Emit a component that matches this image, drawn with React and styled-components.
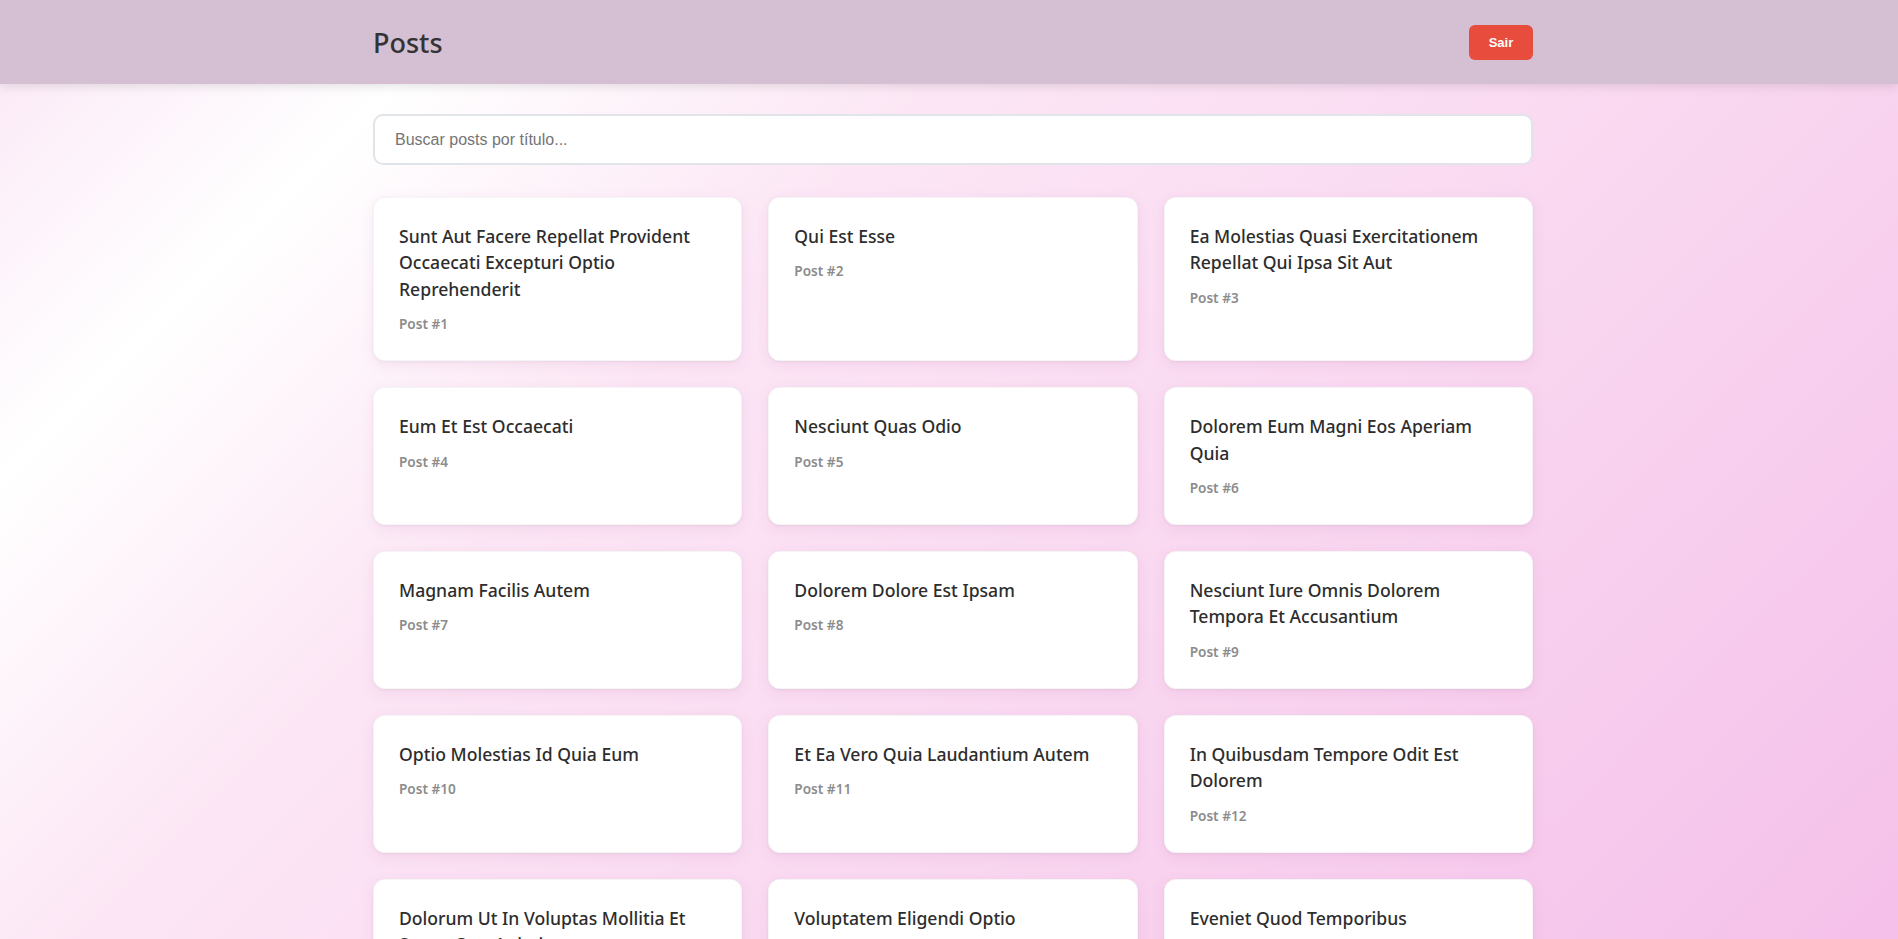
import React from "react";
import styled, { createGlobalStyle } from "styled-components";

const GlobalStyle = createGlobalStyle`
  * { box-sizing: border-box; }
  html, body { margin: 0; padding: 0; }
  body {
    font-family: "Noto Sans", "Open Sans", sans-serif;
    background: linear-gradient(135deg, #fbe6f5 0%, #fdf4fb 9%, #ffffff 17%, #fce6f5 36%, #f9d6f0 66%, #f5c0ea 100%) fixed;
    min-height: 100vh;
    color: #333;
  }
`;

const Header = styled.header`
  height: 84px;
  background: #d4bfd3;
  box-shadow: 0 2px 10px rgba(0, 0, 0, 0.12);
  position: relative;
  z-index: 1;
`;

const HeaderInner = styled.div`
  width: 1160px;
  margin-left: calc(50% - 576px);
  height: 100%;
  display: flex;
  align-items: center;
  justify-content: space-between;
`;

const Title = styled.h1`
  margin: 0;
  font-size: 27px;
  font-weight: 500;
  color: #333;
`;

const LogoutButton = styled.button`
  width: 64px;
  height: 35px;
  border: none;
  border-radius: 6px;
  background: #e74c3c;
  color: #fff;
  font-family: "Liberation Sans", Arial, sans-serif;
  font-size: 13px;
  font-weight: 600;
  cursor: pointer;
`;

const Main = styled.main`
  width: 1160px;
  margin-left: calc(50% - 576px);
  padding-top: 30px;
`;

const SearchInput = styled.input`
  display: block;
  width: 100%;
  height: 51px;
  padding: 0 20px;
  border: 2px solid #e1e4e8;
  border-radius: 10px;
  background: #fff;
  font-family: "Liberation Sans", Arial, sans-serif;
  font-size: 16px;
  color: #333;
  outline: none;
  margin-bottom: 32px;
  &::placeholder { color: #757575; }
`;

const Grid = styled.div`
  display: grid;
  grid-template-columns: repeat(3, 1fr);
  gap: 26px 26px;
  padding-bottom: 40px;
`;

const Card = styled.article`
  background: #fff;
  border-radius: 12px;
  padding: 25px 25px 26px;
  box-shadow: 0 4px 14px rgba(190, 110, 170, 0.12), 0 1px 3px rgba(0, 0, 0, 0.05);
  border: 1px solid rgba(0, 0, 0, 0.04);
`;

const CardTitle = styled.h2`
  margin: 0 0 12px;
  font-size: 17.6px;
  line-height: 26.4px;
  font-weight: 500;
  color: #2d2d2d;
`;

const CardMeta = styled.p`
  margin: 0;
  font-size: 13.6px;
  line-height: 20px;
  font-weight: 600;
  color: #8c8c8c;
`;

const titles = [
  "sunt aut facere repellat provident occaecati excepturi optio reprehenderit",
  "qui est esse",
  "ea molestias quasi exercitationem repellat qui ipsa sit aut",
  "eum et est occaecati",
  "nesciunt quas odio",
  "dolorem eum magni eos aperiam quia",
  "magnam facilis autem",
  "dolorem dolore est ipsam",
  "nesciunt iure omnis dolorem tempora et accusantium",
  "optio molestias id quia eum",
  "et ea vero quia laudantium autem",
  "in quibusdam tempore odit est dolorem",
  "dolorum ut in voluptas mollitia et saepe quo animi",
  "voluptatem eligendi optio",
  "eveniet quod temporibus",
  "sint suscipit perspiciatis velit dolorum rerum ipsa laboriosam odio",
  "fugit voluptas sed molestias voluptatem provident",
  "voluptate et itaque vero tempora molestiae",
];

const capitalize = (s) =>
  s.split(" ").map((w) => w.charAt(0).toUpperCase() + w.slice(1)).join(" ");

export default function App() {
  return (
    <>
      <GlobalStyle />
      <Header>
        <HeaderInner>
          <Title>Posts</Title>
          <LogoutButton>Sair</LogoutButton>
        </HeaderInner>
      </Header>
      <Main>
        <SearchInput placeholder="Buscar posts por título..." />
        <Grid>
          {titles.map((t, i) => (
            <Card key={i}>
              <CardTitle>{capitalize(t)}</CardTitle>
              <CardMeta>Post #{i + 1}</CardMeta>
            </Card>
          ))}
        </Grid>
      </Main>
    </>
  );
}
